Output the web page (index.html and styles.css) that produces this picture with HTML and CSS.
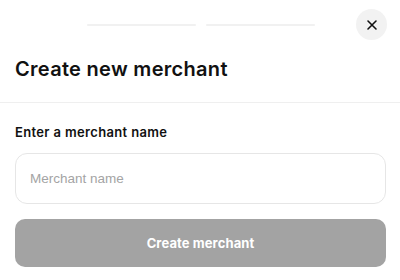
FILE: index.html
```html
<!DOCTYPE html>
<html>
<head>
    <title>Create new merchant</title>
    <link rel="stylesheet" href="styles.css">
</head>
<body>
    <div class="top">
        <div></div>
        <div class="steps">
            <span class="step"></span>
            <span class="step"></span>
        </div>
        <button class="close" aria-label="Close">
            <svg width="12" height="12" viewBox="0 0 12 12">
                <path d="M2 2 L10 10 M10 2 L2 10" stroke="#111" stroke-width="1.6" stroke-linecap="round"/>
            </svg>
        </button>
    </div>

    <div class="head">
        <h1 class="title">Create new merchant</h1>
    </div>

    <form class="form">
        <label class="label" for="name">Enter a merchant name</label>
        <input class="input" id="name" type="text" placeholder="Merchant name">
        <button class="submit" type="button" disabled>Create merchant</button>
    </form>
</body>
</html>
```

FILE: styles.css
```css
body { margin: 0; background: #fff; font-family: Inter, "Noto Sans", sans-serif; color: #111; }

.top {
    display: grid; grid-template-columns: 1fr auto 1fr; align-items: center;
    padding: 9px 13px 0 15px;
}
.steps { display: flex; gap: 10px; }
.step { display: block; width: 109px; height: 2px; background: #f1f1f1; border-radius: 1px; }
.close {
    justify-self: end; width: 31px; height: 31px; border-radius: 50%;
    border: none; background: #f2f2f2; padding: 0; cursor: pointer;
    display: flex; align-items: center; justify-content: center;
}

.head { padding: 17px 15px 21px; border-bottom: 1px solid #efefef; }
.title { margin: 0; font-size: 20px; line-height: 24px; font-weight: 600; letter-spacing: 0.3px; }

.form { display: flex; flex-direction: column; padding: 21px 14px 0 15px; }
.label { font-size: 13px; line-height: 16px; font-weight: 600; letter-spacing: 0.35px; }
.input {
    margin-top: 13px; height: 51px; box-sizing: border-box;
    border: 1px solid #e6e6e6; border-radius: 12px; padding: 0 14px;
    font-family: "Liberation Sans", Arial, sans-serif; font-size: 13.5px; color: #111;
}
.input::placeholder { color: #a4a4a4; }
.submit {
    margin-top: 15px; height: 48px; border: none; border-radius: 10px;
    background: #a3a3a3; color: #fff;
    font-family: Inter, sans-serif; font-size: 13px; font-weight: 700; letter-spacing: 0.1px;
}
```
